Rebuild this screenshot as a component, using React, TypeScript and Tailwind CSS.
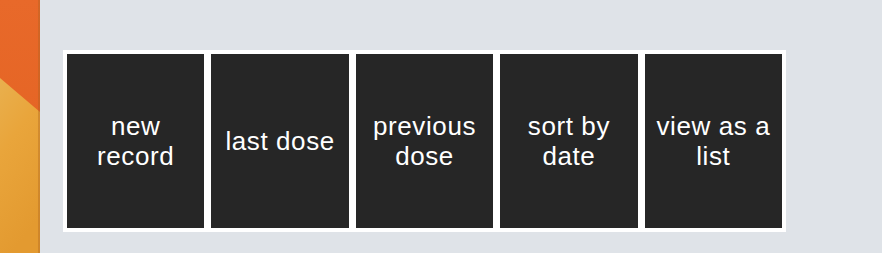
import React from 'react'

const actions = ['new record', 'last dose', 'previous dose', 'sort by date', 'view as a list']

function Wallpaper() {
    return (
        <svg className="block h-full w-full" viewBox="0 0 40 253" preserveAspectRatio="none">
            <defs>
                <linearGradient id="top" x1="0" y1="0" x2="0" y2="1">
                    <stop offset="0" stopColor="#e8692a" />
                    <stop offset="1" stopColor="#e2611f" />
                </linearGradient>
                <linearGradient id="low" x1="0" y1="0" x2="0.3" y2="1">
                    <stop offset="0" stopColor="#e9b04e" />
                    <stop offset="0.4" stopColor="#e9a53b" />
                    <stop offset="1" stopColor="#e39a30" />
                </linearGradient>
            </defs>
            <rect x="0" y="0" width="40" height="253" fill="url(#top)" />
            <polygon points="0,78 40,112 40,253 0,253" fill="url(#low)" />
            <rect x="38" y="0" width="2" height="253" fill="#a8601f" opacity="0.35" />
        </svg>
    )
}

export default function App() {
    return (
        <div className="flex h-[253px] w-[882px] bg-[#dfe3e8] font-['Liberation_Sans',Arial,sans-serif]">
            <div className="h-full w-[40px] shrink-0">
                <Wallpaper />
            </div>

            <div className="pl-[23px] pt-[50px]">
                <div className="flex h-[182px] w-[723px] gap-[7px] bg-white p-[4px]">
                    {actions.map((label) => (
                        <button
                            key={label}
                            className="flex flex-1 items-center justify-center bg-[#262626] px-2 text-center text-[26px] leading-[30px] tracking-[0.6px] text-white"
                        >
                            {label}
                        </button>
                    ))}
                </div>
            </div>
        </div>
    )
}
